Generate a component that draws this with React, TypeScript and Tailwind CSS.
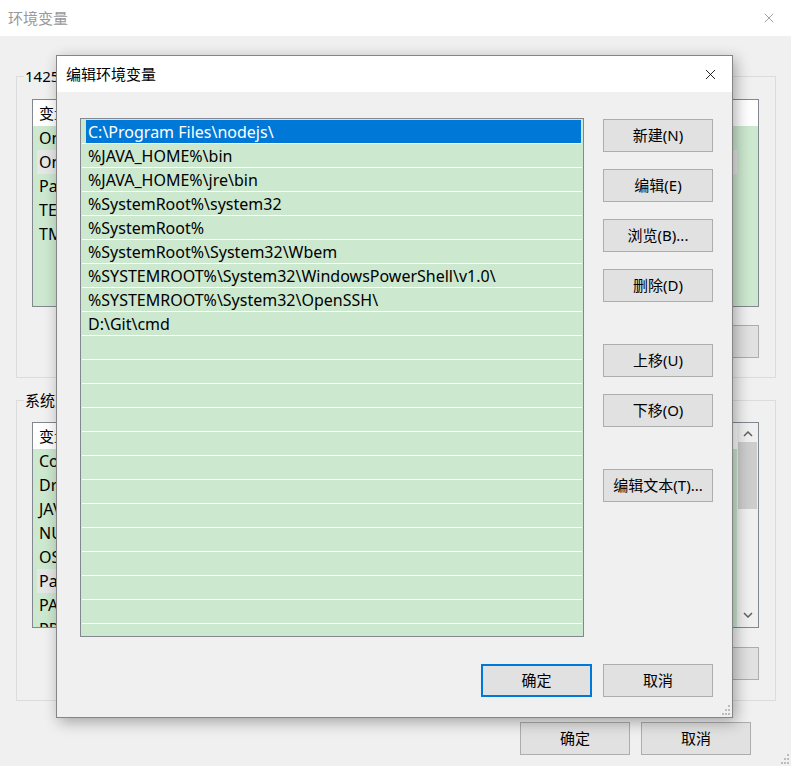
import { X } from "lucide-react"

const font = { fontFamily: '"Noto Sans", "Noto Sans CJK SC", sans-serif' }

const paths = [
  "C:\\Program Files\\nodejs\\",
  "%JAVA_HOME%\\bin",
  "%JAVA_HOME%\\jre\\bin",
  "%SystemRoot%\\system32",
  "%SystemRoot%",
  "%SystemRoot%\\System32\\Wbem",
  "%SYSTEMROOT%\\System32\\WindowsPowerShell\\v1.0\\",
  "%SYSTEMROOT%\\System32\\OpenSSH\\",
  "D:\\Git\\cmd",
]

const userVars = ["OneDrive", "OneDriveConsumer", "Path", "TEMP", "TMP"]
const sysVars = ["ComSpec", "DriverData", "JAVA_HOME", "NUMBER_OF_PROCESSORS", "OS", "Path", "PATHEXT", "PROCESSOR_ARCHITECTURE"]

function WinButton({ label, primary = false, className = "" }: { label: string; primary?: boolean; className?: string }) {
  return (
    <button
      className={`flex h-[33px] w-[110px] items-center justify-center bg-[#e1e1e1] text-[15px] text-black ${
        primary ? "border-2 border-[#0078d7]" : "border border-[#adadad]"
      } ${className}`}
    >
      {label}
    </button>
  )
}

function Grip() {
  return (
    <svg width="12" height="12" viewBox="0 0 12 12" className="fill-[#bcbcbc]">
      <rect x="9" y="1" width="2" height="2" />
      <rect x="6" y="5" width="2" height="2" />
      <rect x="9" y="5" width="2" height="2" />
      <rect x="3" y="9" width="2" height="2" />
      <rect x="6" y="9" width="2" height="2" />
      <rect x="9" y="9" width="2" height="2" />
    </svg>
  )
}

function VarList({ rows, selected, height, scroll = false }: { rows: string[]; selected: number; height: string; scroll?: boolean }) {
  return (
    <div className={`ml-[15px] mr-[16px] flex overflow-hidden border border-[#828790] bg-[#cce8cf] ${height}`}>
      <div className="flex-1">
        <div className="flex h-[26px] items-center bg-white pl-[6px] text-[15px] text-black">
          <span className="w-[200px]">变量</span>
          <span>值</span>
        </div>
        {rows.map((r, i) => (
          <div key={r} className="h-[24px] pl-[4px] pr-[21px]">
            <div className={`flex h-full items-center pl-[2px] text-[16px] text-black ${i === selected ? "bg-[#e6e6e6]" : ""}`}>
              {r}
            </div>
          </div>
        ))}
      </div>
      {scroll && (
        <div className="flex w-[21px] flex-col items-center bg-[#f0f0f0]">
          <svg width="10" height="6" viewBox="0 0 10 6" className="mt-[8px] stroke-[#606060]" fill="none" strokeWidth="1.5">
            <path d="M1 5 L5 1 L9 5" />
          </svg>
          <div className="mt-[5px] h-[67px] w-[19px] bg-[#cdcdcd]" />
          <div className="flex-1" />
          <svg width="10" height="6" viewBox="0 0 10 6" className="mb-[9px] stroke-[#606060]" fill="none" strokeWidth="1.5">
            <path d="M1 1 L5 5 L9 1" />
          </svg>
        </div>
      )}
    </div>
  )
}

export default function App() {
  const rows = [...paths, ...Array(14).fill("")]

  return (
    <div className="relative h-[766px] w-[791px] overflow-hidden bg-[#f0f0f0]" style={font}>
      {/* Background window: 环境变量 */}
      <div className="flex h-[36px] items-center justify-between bg-white pl-[8px] pr-[14px]">
        <span className="text-[15px] text-[#999999]">环境变量</span>
        <X className="h-[16px] w-[16px] text-[#8a8a8a]" strokeWidth={1.2} />
      </div>

      <div className="pl-[16px] pr-[15px] pt-[40px]">
        <div className="border border-[#dcdcdc] pb-[19px]">
          <div className="-mt-[11px] ml-[7px] h-[20px] w-fit bg-[#f0f0f0] px-[1px] text-[15px] leading-[20px] text-black">
            14252 的用户变量(U)
          </div>
          <div className="mt-[13px]">
            <VarList rows={userVars} selected={1} height="h-[208px]" />
          </div>
          <div className="mr-[16px] mt-[18px] flex justify-end gap-[11px]">
            <WinButton label="新建(N)..." />
            <WinButton label="编辑(E)..." />
            <WinButton label="删除(D)" />
          </div>
        </div>

        <div className="mt-[22px] border border-[#dcdcdc] pb-[20px]">
          <div className="-mt-[11px] ml-[7px] h-[20px] w-fit bg-[#f0f0f0] px-[1px] text-[15px] leading-[20px] text-black">
            系统变量(S)
          </div>
          <div className="mt-[12px]">
            <VarList rows={sysVars} selected={5} height="h-[206px]" scroll />
          </div>
          <div className="mr-[16px] mt-[19px] flex justify-end gap-[11px]">
            <WinButton label="新建(W)..." />
            <WinButton label="编辑(I)..." />
            <WinButton label="删除(L)" />
          </div>
        </div>

        <div className="mr-[25px] mt-[21px] flex justify-end gap-[11px]">
          <WinButton label="确定" />
          <WinButton label="取消" />
        </div>
      </div>
      <div className="absolute bottom-[1px] right-[1px]">
        <Grip />
      </div>

      {/* Dialog: 编辑环境变量 */}
      <div className="absolute left-[56px] top-[55px] flex h-[663px] w-[677px] flex-col border border-[#858585] bg-[#f0f0f0] shadow-[3px_4px_14px_rgba(0,0,0,0.32)]">
        <div className="flex h-[36px] items-center justify-between bg-white pl-[9px] pr-[13px]">
          <span className="text-[15px] text-black">编辑环境变量</span>
          <X className="h-[17px] w-[17px] text-black" strokeWidth={1.2} />
        </div>

        <div className="flex pl-[23px] pt-[26px]">
          <div className="h-[519px] w-[504px] overflow-hidden border border-[#828790] bg-[#cce8cf] px-[1px] pt-[1px]">
            {rows.map((p, i) => (
              <div key={i} className="h-[24px] border-b border-white pl-[4px] pr-[1px]">
                <div
                  className={`flex h-full items-center pl-[2px] text-[16px] ${
                    i === 0 ? "bg-[#0078d7] text-white" : "text-black"
                  }`}
                >
                  {p}
                </div>
              </div>
            ))}
          </div>

          <div className="ml-[19px] mt-[1px] flex flex-col">
            <WinButton label="新建(N)" />
            <WinButton label="编辑(E)" className="mt-[17px]" />
            <WinButton label="浏览(B)..." className="mt-[17px]" />
            <WinButton label="删除(D)" className="mt-[17px]" />
            <WinButton label="上移(U)" className="mt-[42px]" />
            <WinButton label="下移(O)" className="mt-[17px]" />
            <WinButton label="编辑文本(T)..." className="mt-[42px]" />
          </div>
        </div>

        <div className="mt-[27px] flex justify-end gap-[11px] pr-[19px]">
          <WinButton label="确定" primary className="w-[111px]" />
          <WinButton label="取消" />
        </div>
        <div className="mt-auto flex justify-end pb-[1px] pr-[1px]">
          <Grip />
        </div>
      </div>
    </div>
  )
}
